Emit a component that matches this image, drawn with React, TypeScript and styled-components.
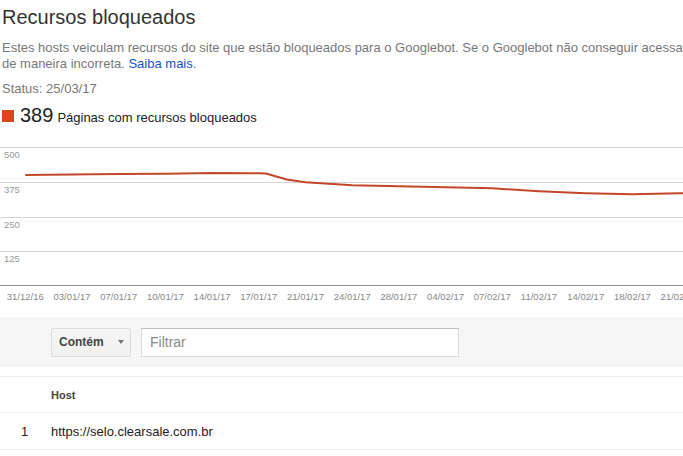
import React from 'react'
import styled, { createGlobalStyle } from 'styled-components'

const GlobalStyle = createGlobalStyle`
	html, body {
		margin: 0;
		padding: 0;
		overflow: hidden;
		background: #fff;
	}
	body {
		font-family: "Liberation Sans", Arial, sans-serif;
	}
`

const Page = styled.div`
	width: 1100px;
	padding-top: 5px;
`

const Header = styled.div`
	padding: 0 2px;
`

const Title = styled.h1`
	margin: 0;
	font-size: 20px;
	line-height: 24px;
	font-weight: normal;
	color: #333;
`

const Description = styled.p`
	margin: 11px 0 0;
	width: 1000px;
	font-size: 13px;
	line-height: 16px;
	color: #777;
`

const Link = styled.a`
	color: #15c;
	text-decoration: none;
`

const Status = styled.div`
	margin-top: 9px;
	font-size: 13px;
	line-height: 16px;
	color: #777;
`

const Legend = styled.div`
	margin-top: 6px;
	height: 24px;
	line-height: 24px;
	color: #222;
`

const Swatch = styled.span`
	display: inline-block;
	width: 12px;
	height: 12px;
	background: #dc4420;
	margin-right: 6px;
`

const Count = styled.span`
	font-size: 20px;
	margin-right: 4px;
`

const LegendLabel = styled.span`
	font-size: 13px;
`

const ChartWrap = styled.div`
	margin-top: 12px;
	height: 168px;
`

const FilterBar = styled.div`
	margin-top: 10px;
	height: 50px;
	background: #f6f6f6;
	display: flex;
	align-items: center;
	gap: 10px;
	padding-left: 51px;
`

const DropButton = styled.div`
	box-sizing: border-box;
	width: 80px;
	height: 29px;
	display: flex;
	align-items: center;
	justify-content: space-between;
	padding: 0 6px 0 7px;
	background: linear-gradient(#f5f5f5, #f1f1f1);
	border: 1px solid #dcdcdc;
	border-radius: 2px;
	font-size: 12px;
	font-weight: bold;
	color: #444;
`

const Caret = styled.span`
	width: 0;
	height: 0;
	border-left: 3.5px solid transparent;
	border-right: 3.5px solid transparent;
	border-top: 4px solid #777;
`

const FilterInput = styled.input`
	box-sizing: border-box;
	width: 318px;
	height: 29px;
	padding: 0 8px;
	border: 1px solid #d9d9d9;
	border-top-color: #c0c0c0;
	font-family: "Liberation Sans", Arial, sans-serif;
	font-size: 14px;
	color: #222;
	outline: none;
	&::placeholder {
		color: #888;
	}
`

const Table = styled.div`
	margin-top: 9px;
	border-top: 1px solid #ebebeb;
`

const Row = styled.div<{ $head?: boolean }>`
	display: flex;
	align-items: center;
	height: ${p => (p.$head ? '35px' : '36px')};
	border-bottom: 1px solid #ebebeb;
	font-size: ${p => (p.$head ? '11px' : '13px')};
	font-weight: ${p => (p.$head ? 'bold' : 'normal')};
	color: ${p => (p.$head ? '#444' : '#222')};
`

const IndexCell = styled.div`
	width: 51px;
	box-sizing: border-box;
	padding-left: 21px;
`

const HostCell = styled.div`
	flex: 1;
`

const yTicks = [
	{ label: '500', y: 8 },
	{ label: '375', y: 43 },
	{ label: '250', y: 78 },
	{ label: '125', y: 112 },
]

const xLabels = [
	'31/12/16', '03/01/17', '07/01/17', '10/01/17', '14/01/17', '17/01/17', '21/01/17', '24/01/17',
	'28/01/17', '04/02/17', '07/02/17', '11/02/17', '14/02/17', '18/02/17', '21/02/17',
]

// page y of the line, one per label
const series = [176, 175.5, 175, 174.8, 174, 174.3, 183.3, 186.2, 187.3, 188.3, 189.3, 192.3, 194.3, 195.3, 194.2, 193.8]

const colX = (i: number) => 25.3 + i * 46.7

const Chart = () => {
	const pts: string[] = []
	series.forEach((py, i) => {
		const x = colX(i)
		const y = py - 140
		if (i === 6) pts.push(`${colX(5) + 7},${174.5 - 140}`, `${colX(5) + 28},${180.5 - 140}`)
		pts.push(`${x},${y}`)
	})
	return (
		<svg width="740" height="168" viewBox="0 0 740 168">
			{yTicks.map(t => (
				<g key={t.label}>
					<line x1="0" x2="740" y1={t.y + 0.5} y2={t.y + 0.5} stroke="#d4d4d4" />
					<text x="4" y={t.y + 11} fontSize="9.5" fill="#999" fontFamily="Liberation Sans, Arial, sans-serif">
						{t.label}
					</text>
				</g>
			))}
			<line x1="0" x2="740" y1="146.5" y2="146.5" stroke="#8f8f8f" />
			<polyline points={pts.join(' ')} fill="none" stroke="#c4462a" strokeWidth="2" strokeLinejoin="round" />
			{xLabels.map((l, i) => (
				<text
					key={l}
					x={colX(i)}
					y="161"
					fontSize="9.5"
					fill="#888"
					textAnchor="middle"
					fontFamily="Liberation Sans, Arial, sans-serif"
				>
					{l}
				</text>
			))}
		</svg>
	)
}

const App = () => {
	return (
		<Page>
			<GlobalStyle />
			<Header>
				<Title>Recursos bloqueados</Title>
				<Description>
					Estes hosts veiculam recursos do site que estão bloqueados para o Googlebot. Se o Googlebot não conseguir acessar
					recursos importantes, a página poderá ser indexada de maneira incorreta. <Link href="#">Saiba mais</Link>.
				</Description>
				<Status>Status: 25/03/17</Status>
				<Legend>
					<Swatch />
					<Count>389</Count>
					<LegendLabel>Páginas com recursos bloqueados</LegendLabel>
				</Legend>
			</Header>
			<ChartWrap>
				<Chart />
			</ChartWrap>
			<FilterBar>
				<DropButton>
					Contém
					<Caret />
				</DropButton>
				<FilterInput placeholder="Filtrar" />
			</FilterBar>
			<Table>
				<Row $head>
					<IndexCell />
					<HostCell>Host</HostCell>
				</Row>
				<Row>
					<IndexCell>1</IndexCell>
					<HostCell>https://selo.clearsale.com.br</HostCell>
				</Row>
			</Table>
		</Page>
	)
}

export default App
